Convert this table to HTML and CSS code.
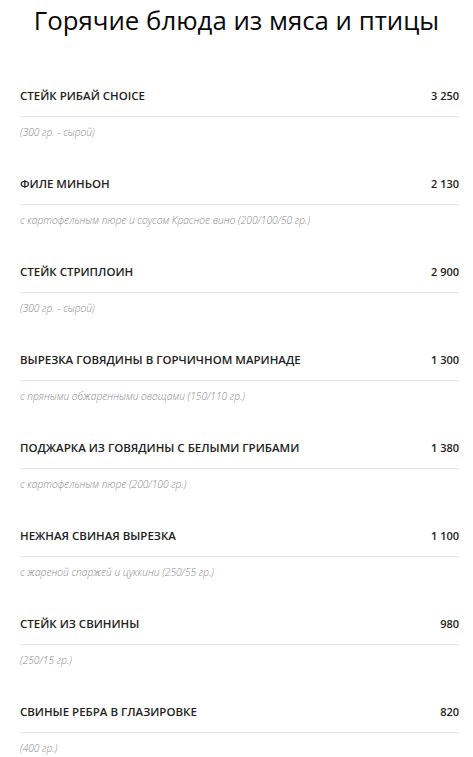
FILE: index.html
```html
<!DOCTYPE html>
<html lang="ru">
<head>
    <meta charset="UTF-8">
    <meta name="viewport" content="width=device-width, initial-scale=1.0">
    <title>Горячие блюда</title>
    <link rel="stylesheet" href="styles.css">
</head>
<body>
    <h1>Горячие блюда из мяса и птицы</h1>
    <div class="menu">
        <div class="item">
            <div class="head"><span class="name">Стейк рибай choice</span><span class="price">3 250</span></div>
            <div class="desc">(300 гр. - сырой)</div>
        </div>
        <div class="item">
            <div class="head"><span class="name">Филе миньон</span><span class="price">2 130</span></div>
            <div class="desc">с картофельным пюре и соусом Красное вино (200/100/50 гр.)</div>
        </div>
        <div class="item">
            <div class="head"><span class="name">Стейк стриплоин</span><span class="price">2 900</span></div>
            <div class="desc">(300 гр. - сырой)</div>
        </div>
        <div class="item">
            <div class="head"><span class="name">Вырезка говядины в горчичном маринаде</span><span class="price">1 300</span></div>
            <div class="desc">с пряными обжаренными овощами (150/110 гр.)</div>
        </div>
        <div class="item">
            <div class="head"><span class="name">Поджарка из говядины с белыми грибами</span><span class="price">1 380</span></div>
            <div class="desc">с картофельным пюре (200/100 гр.)</div>
        </div>
        <div class="item">
            <div class="head"><span class="name">Нежная свиная вырезка</span><span class="price">1 100</span></div>
            <div class="desc">с жареной спаржей и цуккини (250/55 гр.)</div>
        </div>
        <div class="item">
            <div class="head"><span class="name">Стейк из свинины</span><span class="price">980</span></div>
            <div class="desc">(250/15 гр.)</div>
        </div>
        <div class="item">
            <div class="head"><span class="name">Свиные ребра в глазировке</span><span class="price">820</span></div>
            <div class="desc">(400 гр.)</div>
        </div>
    </div>
</body>
</html>
```

FILE: styles.css
```css
body {
    margin: 0;
    font-family: "Open Sans", Arial, sans-serif;
    background-color: #fff;
    color: #111;
}
h1 {
    margin: 4px 0 0;
    font-size: 25.8px;
    line-height: 32px;
    font-weight: 400;
    text-align: center;
    color: #0a0a0a;
}
.menu {
    padding: 50px 14px 0 20px;
}
.item {
    padding-bottom: 34px;
}
.head {
    display: flex;
    justify-content: space-between;
    align-items: center;
    line-height: 20px;
    padding-bottom: 10px;
    border-bottom: 1px solid #e6e6e6;
}
.name {
    font-size: 11.5px;
    font-weight: 600;
    text-transform: uppercase;
    color: #222;
}
.price {
    font-size: 11px;
    font-weight: 600;
    color: #222;
}
.desc {
    margin-top: 7px;
    font-size: 10.2px;
    line-height: 16px;
    font-style: italic;
    font-weight: 300;
    color: #888;
}
```
